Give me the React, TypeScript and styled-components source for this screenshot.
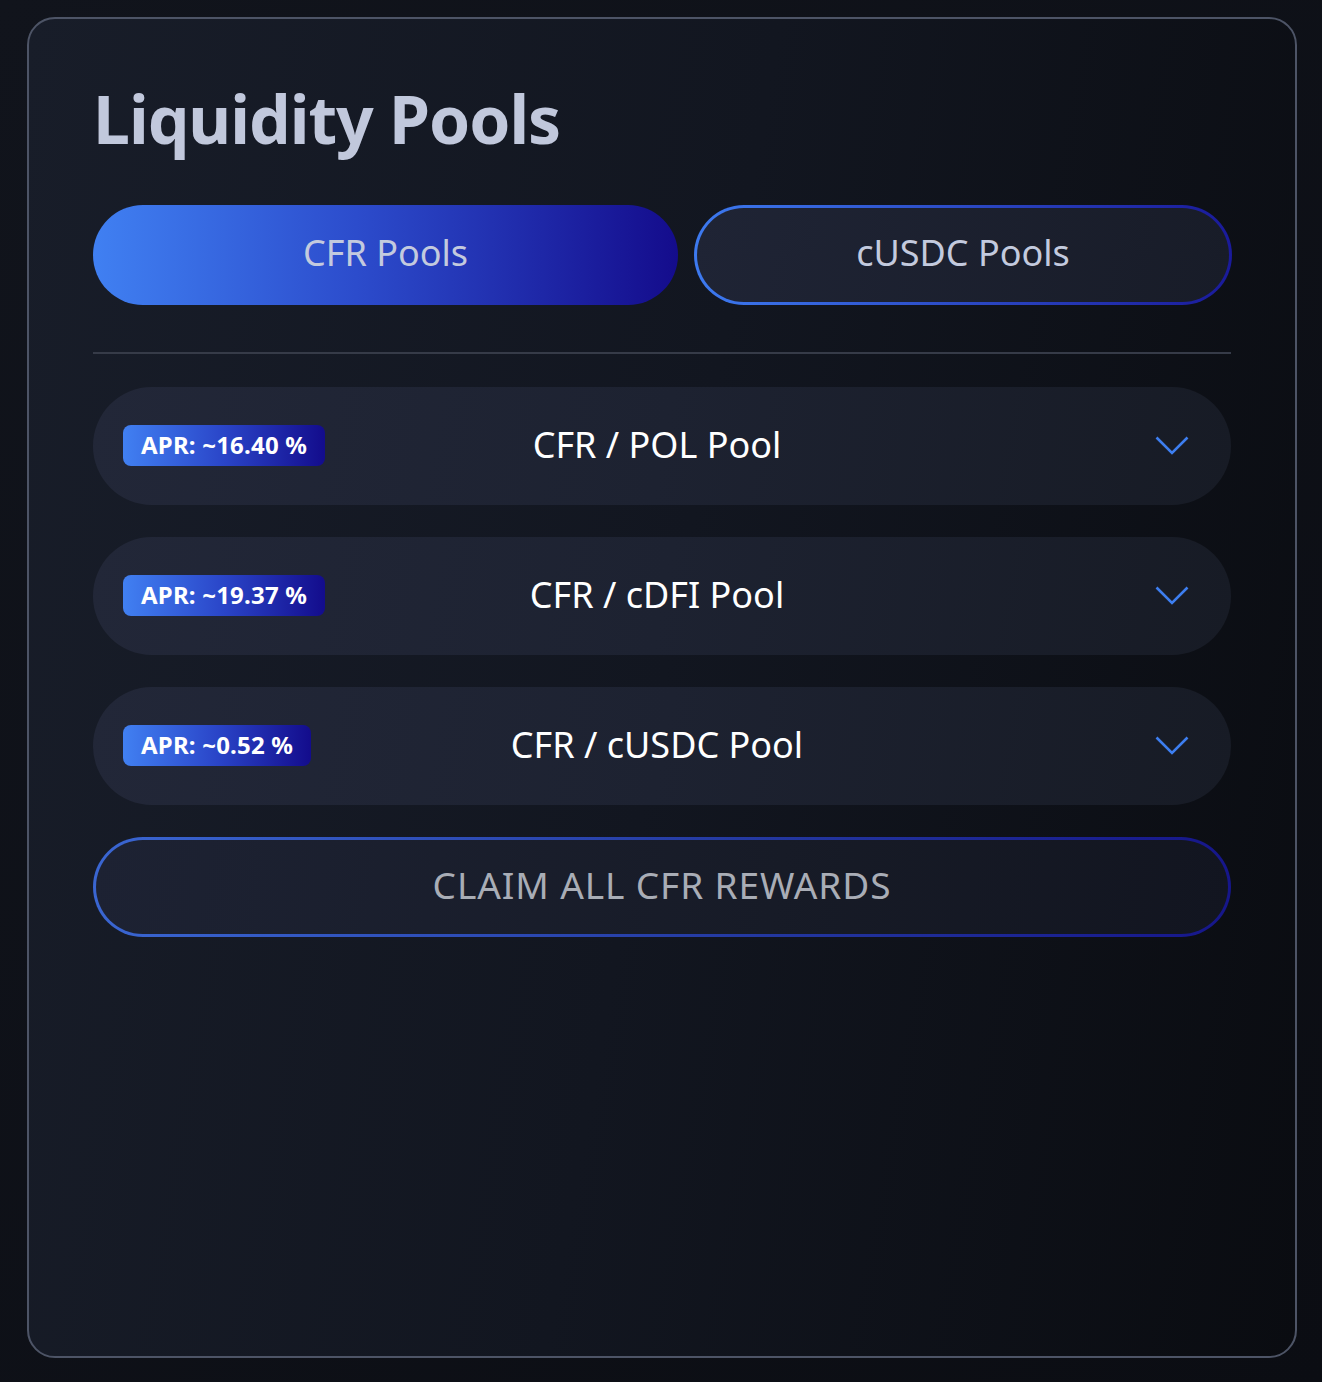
import { createGlobalStyle, styled } from "styled-components";

const GlobalStyle = createGlobalStyle`
  html, body {
    margin: 0;
    padding: 0;
    background: #0e1118;
  }
  body {
    font-family: "Noto Sans", "Open Sans", sans-serif;
  }
  * { box-sizing: border-box; }
`;

const Page = styled.div`
  min-height: 1382px;
  padding: 17px 25px 24px 27px;
  background: linear-gradient(135deg, #11141c 0%, #0b0d13 100%);
`;

const Card = styled.section`
  height: 1341px;
  border: 2px solid #4d5466;
  border-radius: 28px;
  padding: 54px 64px 0 64px;
  background: linear-gradient(100deg, #181d29 0%, #121620 50%, #0a0c11 100%);
`;

const Title = styled.h1`
  margin: 0;
  font-size: 66px;
  font-weight: 700;
  line-height: 90px;
  color: #c1c8dc;
  letter-spacing: -1px;
`;

const Tabs = styled.div`
  display: grid;
  grid-template-columns: 585px 538px;
  gap: 16px;
  margin-top: 42px;
`;

const Tab = styled.button<{ $active?: boolean }>`
  height: 100px;
  border-radius: 50px;
  padding: 0 0 6px;
  font-family: inherit;
  font-size: 36px;
  color: #c3cade;
  cursor: pointer;
  border: 3px solid transparent;
  background: ${(p) =>
    p.$active
      ? "linear-gradient(90deg, #4080f2, #2c4ccc 45%, #140c8c) border-box"
      : "linear-gradient(100deg, #1f2435, #181c28) padding-box, linear-gradient(90deg, #3d7af0, #1a1a9a) border-box"};
`;

const Divider = styled.hr`
  margin: 47px 0 33px;
  border: none;
  border-top: 2px solid #363b48;
`;

const List = styled.div`
  display: flex;
  flex-direction: column;
  gap: 32px;
`;

const PoolRow = styled.div`
  position: relative;
  height: 118px;
  border-radius: 59px;
  display: flex;
  align-items: center;
  padding: 0 30px 4px;
  background: linear-gradient(100deg, #222738 0%, #1d2231 50%, #171b25 100%);
`;

const Badge = styled.span<{ $w: number }>`
  position: absolute;
  left: 30px;
  top: 38px;
  height: 41px;
  padding: 0 0 2px 18px;
  width: ${(p) => p.$w}px;
  border-radius: 8px;
  display: flex;
  align-items: center;
  font-size: 24px;
  font-weight: 700;
  letter-spacing: 0.2px;
  color: #ffffff;
  background: linear-gradient(90deg, #4180f2, #2a45c8 50%, #130c8c);
`;

const PoolName = styled.span`
  flex: 1;
  text-align: center;
  font-size: 36px;
  color: #ffffff;
  padding-right: 10px;
`;

const Chevron = styled.svg`
  position: absolute;
  right: 42px;
  top: 50%;
  margin-top: -10px;
`;

const ClaimButton = styled.button`
  margin-top: 32px;
  width: 100%;
  height: 100px;
  border-radius: 50px;
  padding: 0 0 6px;
  border: 3px solid transparent;
  font-family: inherit;
  font-size: 37px;
  letter-spacing: 0.9px;
  color: #a9adb6;
  cursor: pointer;
  background: linear-gradient(100deg, #1d2233, #171b27 60%, #121520) padding-box,
    linear-gradient(90deg, #3a66d2, #23379f 60%, #16168a) border-box;
`;

const pools = [
  { apr: "APR: ~16.40 %", name: "CFR / POL Pool", w: 202 },
  { apr: "APR: ~19.37 %", name: "CFR / cDFI Pool", w: 202 },
  { apr: "APR: ~0.52 %", name: "CFR / cUSDC Pool", w: 188 },
];

export default function App() {
  return (
    <>
      <GlobalStyle />
      <Page>
        <Card>
          <Title>Liquidity Pools</Title>
          <Tabs>
            <Tab $active>CFR Pools</Tab>
            <Tab>cUSDC Pools</Tab>
          </Tabs>
          <Divider />
          <List>
            {pools.map((p) => (
              <PoolRow key={p.name}>
                <Badge $w={p.w}>{p.apr}</Badge>
                <PoolName>{p.name}</PoolName>
                <Chevron width="34" height="19" viewBox="0 0 34 19" fill="none">
                  <path d="M1.5 1.5 L17 17 L32.5 1.5" stroke="#3d7ef0" strokeWidth="2.6" />
                </Chevron>
              </PoolRow>
            ))}
          </List>
          <ClaimButton>CLAIM ALL CFR REWARDS</ClaimButton>
        </Card>
      </Page>
    </>
  );
}
